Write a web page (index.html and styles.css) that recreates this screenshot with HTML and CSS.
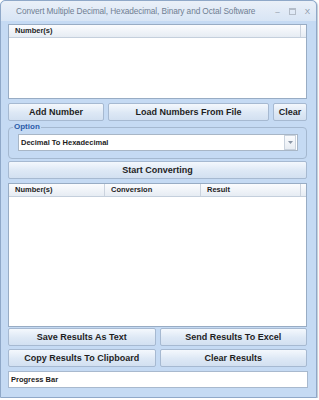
FILE: index.html
```html
<!DOCTYPE html>
<html lang="en">
<head>
  <meta charset="UTF-8" />
  <title>Convert Multiple Decimal, Hexadecimal, Binary and Octal Software</title>
  <link rel="stylesheet" href="styles.css">
</head>
<body>
  <div class="window">
    <div class="titlebar">
      <span class="title">Convert Multiple Decimal, Hexadecimal, Binary and Octal Software</span>
      <span class="controls">
        <span class="ctl min">&#8211;</span>
        <span class="ctl max"></span>
        <span class="ctl close">X</span>
      </span>
    </div>

    <div class="client">
      <div class="listbox numbers">
        <div class="listhead">
          <span class="col col-full">Number(s)</span>
          <span class="col col-end"></span>
        </div>
      </div>

      <div class="btnrow row-top">
        <button class="btn btn-add">Add Number</button>
        <button class="btn btn-load">Load Numbers From File</button>
        <button class="btn btn-clear">Clear</button>
      </div>

      <fieldset class="group">
        <legend>Option</legend>
        <div class="combo">
          <span class="combo-text">Decimal To Hexadecimal</span>
          <span class="combo-btn">
            <svg width="5" height="3" viewBox="0 0 5 3"><path d="M0 0h5L2.5 3z" fill="#8a96a6"/></svg>
          </span>
        </div>
      </fieldset>

      <button class="btn btn-wide">Start Converting</button>

      <div class="listbox results">
        <div class="listhead">
          <span class="col col-a">Number(s)</span>
          <span class="col col-b">Conversion</span>
          <span class="col col-c">Result</span>
          <span class="col col-end"></span>
        </div>
      </div>

      <div class="btnrow row-save">
        <button class="btn btn-half">Save Results As Text</button>
        <button class="btn btn-half">Send Results To Excel</button>
      </div>
      <div class="btnrow row-copy">
        <button class="btn btn-half">Copy Results To Clipboard</button>
        <button class="btn btn-half">Clear Results</button>
      </div>

      <div class="progress">Progress Bar</div>
    </div>
  </div>
</body>
</html>
```

FILE: styles.css
```css
body {
  margin: 0;
  background: #fff;
  font-family: "Liberation Sans", Arial, sans-serif;
  color: #1c1c1c;
}
.window {
  width: 315px;
  height: 396px;
  border: 1px solid #8fa8c8;
  border-radius: 5px 5px 0 0;
  background: #c5daf3;
  box-shadow: 1px 1px 1px rgba(80,100,130,0.35);
  display: flex;
  flex-direction: column;
}
.titlebar {
  height: 20px;
  display: flex;
  align-items: center;
  padding: 0 6px 0 15px;
  background: linear-gradient(#eaf0f8, #d8e5f5);
  border-radius: 5px 5px 0 0;
}
.title {
  flex: 1;
  font-size: 8.3px;
  letter-spacing: -0.1px;
  color: #6f7f93;
  white-space: nowrap;
}
.controls {
  display: flex;
  align-items: center;
  gap: 9px;
}
.ctl {
  color: #8995a5;
  font-size: 8px;
}
.ctl.max {
  width: 5px;
  height: 4px;
  border: 1px solid #b3bcc8;
  border-top-width: 2px;
}
.client {
  padding: 3px 9px 0 7px;
  display: flex;
  flex-direction: column;
}
.listbox {
  background: #fff;
  border: 1px solid #98acc4;
}
.numbers {
  height: 73px;
}
.results {
  height: 142px;
  margin-top: 4px;
}
.listhead {
  height: 12px;
  display: flex;
  background: linear-gradient(#fbfcfe, #e6ecf3);
  border-bottom: 1px solid #c4cfdc;
  font-size: 7.5px;
  font-weight: bold;
}
.col {
  border-right: 1px solid #cbd3de;
  padding: 0 6px;
  line-height: 12px;
  white-space: nowrap;
}
.col-full { flex: 1; }
.col-a { width: 83px; }
.col-b { width: 83px; }
.col-c { flex: 1; }
.col-end {
  width: 5px;
  padding: 0;
  border-right: 0;
}
.btnrow {
  display: flex;
  gap: 4px;
}
.row-top { margin-top: 4px; }
.row-save { margin-top: 1px; }
.row-copy { margin-top: 3px; }
.btn {
  height: 18px;
  padding: 0;
  font-family: "Liberation Sans", Arial, sans-serif;
  font-size: 9px;
  font-weight: bold;
  color: #1e1e1e;
  border: 1px solid #a6b9d1;
  border-radius: 2px;
  background: linear-gradient(#f4f8fd, #dde8f5 55%, #d2e0f1);
}
.btn-add { width: 96px; }
.btn-load { flex: 1; }
.btn-clear { width: 34px; }
.btn-half { flex: 1; }
.btn-wide {
  margin-top: 2px;
  width: 100%;
}
.group {
  margin: 2px 0 0;
  height: 36px;
  box-sizing: border-box;
  border: 1px solid #a4b8d0;
  border-radius: 4px;
  padding: 0 8px 0 9px;
}
.group legend {
  font-size: 8px;
  font-weight: bold;
  color: #2b5ca8;
  padding: 0 1px;
  margin-left: -5px;
  line-height: 8px;
}
.combo {
  margin-top: 3px;
  height: 15px;
  background: #fff;
  border: 1px solid #a8b6c6;
  display: flex;
  align-items: center;
}
.combo-text {
  flex: 1;
  font-size: 7.5px;
  font-weight: bold;
  padding-left: 2px;
}
.combo-btn {
  width: 10px;
  height: 13px;
  margin-right: 1px;
  border: 1px solid #c9d2dd;
  background: linear-gradient(#fafbfd, #e8edf3);
  display: flex;
  align-items: center;
  justify-content: center;
}
.progress {
  margin: 4px -1px 0 0;
  height: 15px;
  background: #fff;
  border: 1px solid #a8b9ce;
  font-size: 7.5px;
  font-weight: bold;
  line-height: 15px;
  padding-left: 2px;
}
```
